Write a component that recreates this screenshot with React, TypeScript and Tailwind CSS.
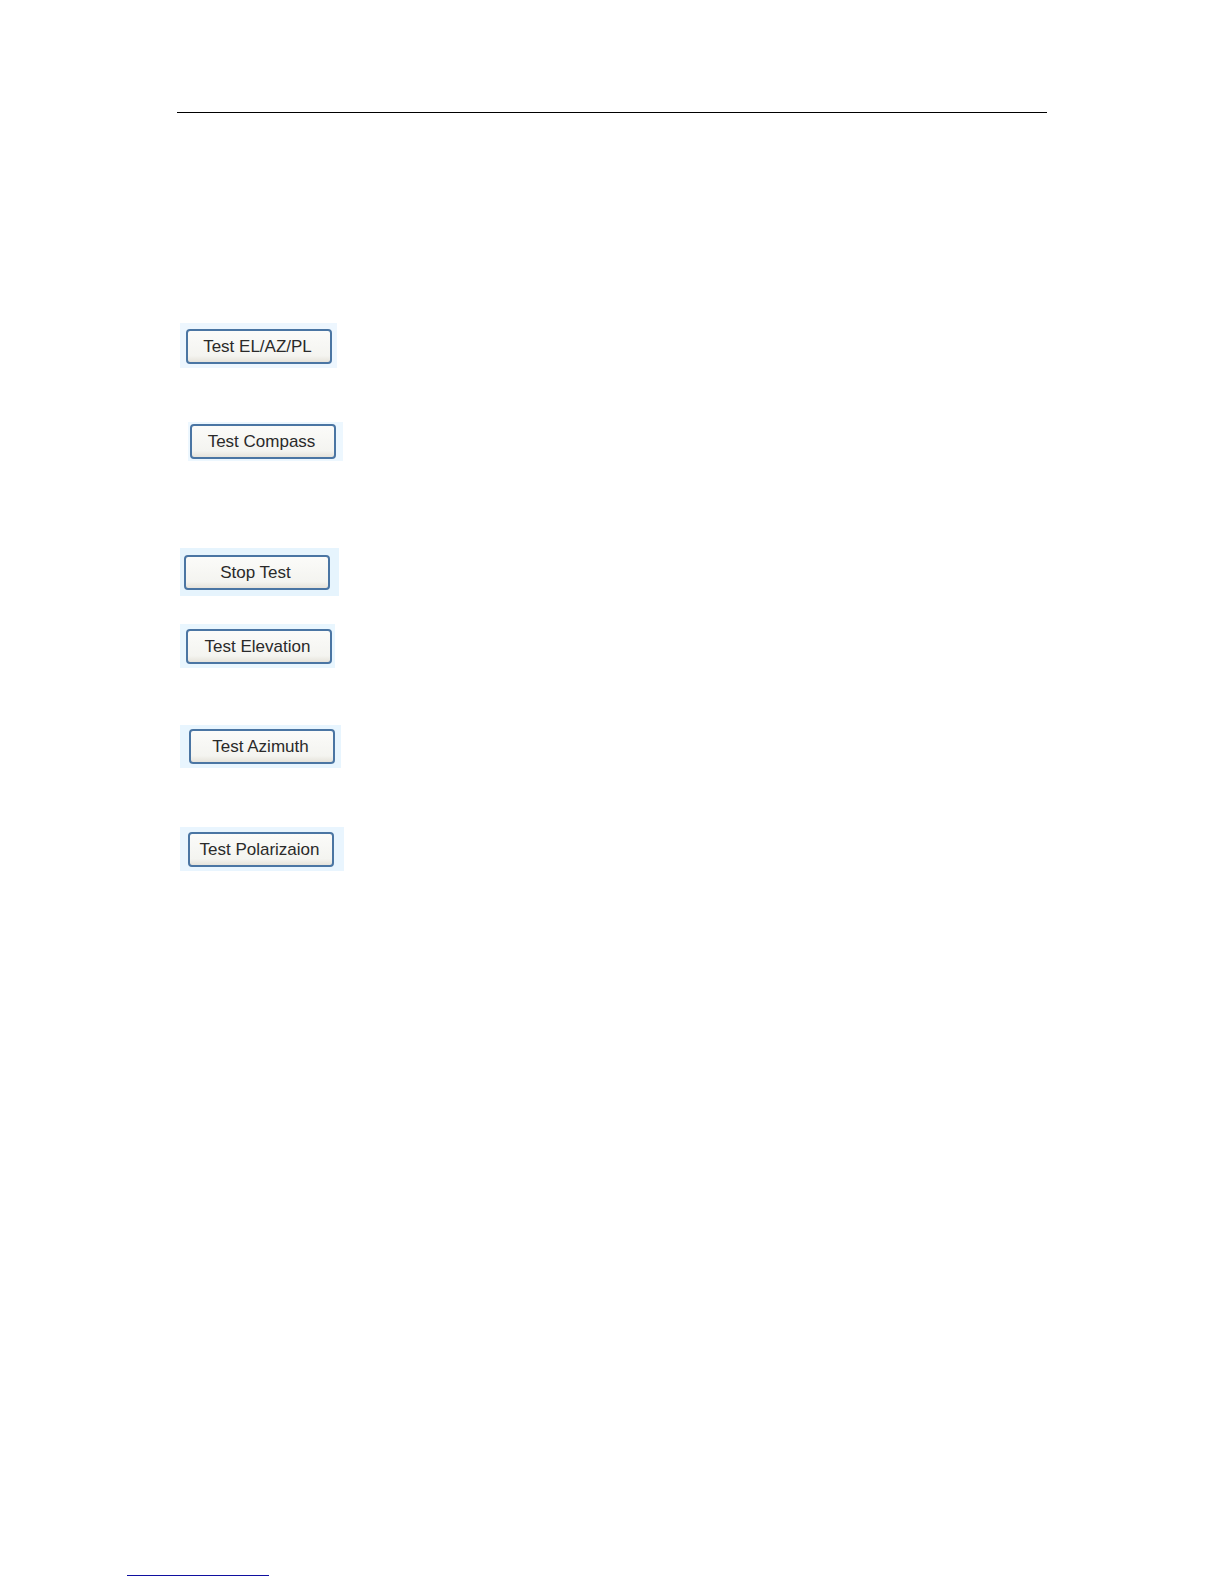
const tests = [
  { label: "Test EL/AZ/PL", panel: "mt-[210px] pt-[6px] pr-[5px] pb-1 pl-[6px] bg-[#edf6fe]" },
  { label: "Test Compass", panel: "ml-2 mt-[54px] pt-[2px] pr-[7px] pb-[2px] pl-[2px] bg-[#edf7fe]" },
  { label: "Stop Test", panel: "mt-[87px] pt-[7px] pr-[9px] pb-[6px] pl-1 bg-[#e6f4fd]" },
  { label: "Test Elevation", panel: "mt-7 pt-[5px] pr-[3px] pb-1 pl-[6px] bg-[#e9f6fe]" },
  { label: "Test Azimuth", panel: "mt-[57px] pt-1 pr-[6px] pb-1 pl-[9px] bg-[#e8f5fe]" },
  { label: "Test Polarizaion", panel: "mt-[59px] pt-[5px] pr-[10px] pb-1 pl-2 bg-[#e9f5fe]" },
];

function TestButton({ label }: { label: string }) {
  return (
    <button
      type="button"
      className="block h-[35px] w-[146px] whitespace-nowrap rounded-[4px] border-2 border-[#4a75a3] bg-gradient-to-b from-[#fbfbf9] via-[#f4f4f0] via-80% to-[#e6e3db] pr-[3px] text-center text-[17px] leading-[30px] text-[#2a2a2a]"
    >
      {label}
    </button>
  );
}

export default function App() {
  return (
    <div className="flex min-h-screen flex-col bg-white font-['Liberation_Sans',Arial,sans-serif]">
      <header className="px-[177px] pt-28">
        <hr className="border-t border-black" />
      </header>
      <main className="flex grow flex-col items-start px-[180px]">
        {tests.map(({ label, panel }) => (
          <div key={label} className={panel}>
            <TestButton label={label} />
          </div>
        ))}
      </main>
      <footer className="pb-2 pl-[127px]">
        <hr className="w-[142px] border-t border-[#1010a0]" />
      </footer>
    </div>
  );
}
